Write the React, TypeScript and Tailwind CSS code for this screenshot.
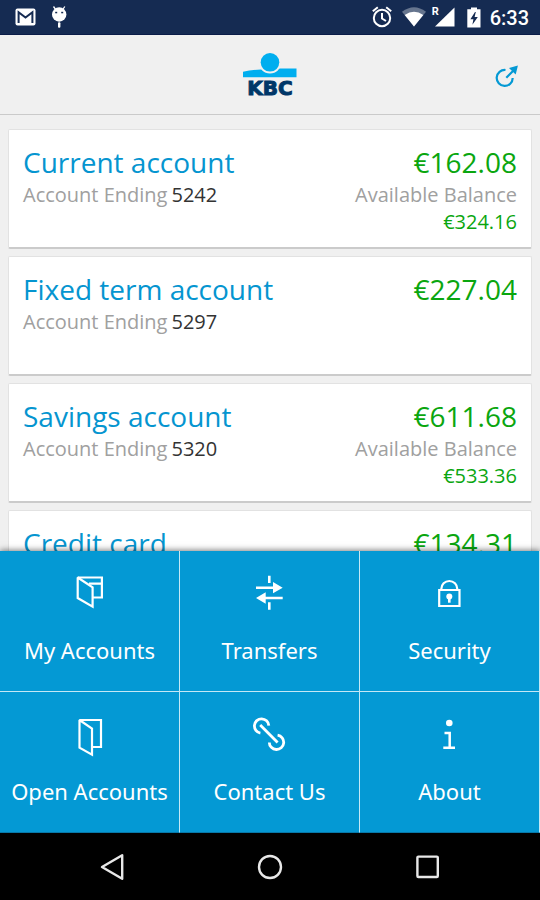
import type { ReactNode } from "react";

interface Account {
  name: string;
  ending: string;
  balance: string;
  available?: string;
}

const accounts: Account[] = [
  { name: "Current account", ending: "5242", balance: "€162.08", available: "€324.16" },
  { name: "Fixed term account", ending: "5297", balance: "€227.04" },
  { name: "Savings account", ending: "5320", balance: "€611.68", available: "€533.36" },
  { name: "Credit card", ending: "5338", balance: "€134.31" },
];

function MenuIcon({ children }: { children: ReactNode }) {
  return (
    <svg
      viewBox="0 0 49 49"
      className="h-[49px] w-[49px]"
      fill="none"
      stroke="currentColor"
      strokeWidth="2.2"
      strokeMiterlimit="2"
      aria-hidden="true"
    >
      {children}
    </svg>
  );
}

const menuItems = [
  {
    label: "My Accounts",
    icon: (
      <MenuIcon>
        <path d="M27.6 26.5H36.9V6.5H12.7M24 12.7H36.9" />
        <path d="M12.7 6.5L27.6 16.3V35.6L12.7 27Z" />
      </MenuIcon>
    ),
  },
  {
    label: "Transfers",
    icon: (
      <MenuIcon>
        <path d="M24.3 4.7V12M24.3 31.3V38.7M11 16.7H29M20 27H37.7" strokeWidth="2.6" />
        <path d="M28 11L37.7 16.7L28 22.3ZM20.7 21.3L11 27L20.7 32.7Z" fill="currentColor" stroke="none" />
      </MenuIcon>
    ),
  },
  {
    label: "Security",
    icon: (
      <MenuIcon>
        <path d="M14.2 19H34.5V35H14.2ZM16.3 19V18A8 8 0 0 1 32.3 18V19" />
        <circle cx="24.3" cy="25.5" r="3" fill="currentColor" stroke="none" />
        <path d="M24.3 26V31.7" strokeWidth="2.6" />
      </MenuIcon>
    ),
  },
  {
    label: "Open Accounts",
    icon: (
      <MenuIcon>
        <path d="M27 35H36V8H14.5" />
        <path d="M14.5 8L27 16.5V42.7L14.5 35.7Z" />
      </MenuIcon>
    ),
  },
  {
    label: "Contact Us",
    icon: (
      <MenuIcon>
        <path
          d="M15.2 13L32.6 30.6M23.8 13.6A7.2 7.2 0 1 0 15.4 21.1M24.3 30.4A7.2 7.2 0 1 0 32.6 23.2"
          strokeWidth="2.8"
        />
      </MenuIcon>
    ),
  },
  {
    label: "About",
    icon: (
      <MenuIcon>
        <circle cx="24.3" cy="11" r="3.3" fill="currentColor" stroke="none" />
        <path d="M19.5 21H24.7V35.7M18.3 35.7H30" strokeWidth="2.5" />
      </MenuIcon>
    ),
  },
];

function StatusBar() {
  return (
    <div className="flex h-[35px] shrink-0 items-center justify-between border-b border-[#0a1c48] bg-[#152b52] pl-[15px] pr-[11px] text-white">
      <div className="flex items-center gap-4">
        <svg viewBox="0 0 21 18" className="h-[18px] w-[21px]" aria-hidden="true">
          <rect x="0.5" y="0.5" width="20" height="17" rx="2" fill="currentColor" />
          <path d="M3.6 15V4.2L10.5 9.6L17.4 4.2V15" fill="none" stroke="#152b52" strokeWidth="2" />
        </svg>
        <svg viewBox="0 0 15 22" className="h-[22px] w-[15px]" fill="currentColor" aria-hidden="true">
          <circle cx="7.2" cy="8.5" r="7.2" />
          <path d="M1.5 0.5L4 4M12.8 0.5L10.4 4" stroke="currentColor" strokeWidth="1.3" />
          <rect x="6" y="16.3" width="2.4" height="5.5" rx="1" />
          <rect x="3.2" y="5.8" width="2" height="1.5" fill="#152b52" />
          <rect x="9.2" y="5.8" width="2" height="1.5" fill="#152b52" />
        </svg>
      </div>
      <div className="flex items-center">
        <svg viewBox="0 0 20 22" className="h-[22px] w-5" fill="none" stroke="currentColor" strokeWidth="2" aria-hidden="true">
          <circle cx="10" cy="12" r="8.2" />
          <path d="M10 7V12.5L14 15M0.8 5.2L5.8 1.2M19.2 5.2L14.2 1.2" />
        </svg>
        <svg viewBox="0 0 24 20" className="ml-[10px] h-5 w-6" fill="currentColor" aria-hidden="true">
          <path d="M0 4.8Q12 -4.2 24 4.8L12 19.5Z" opacity="0.35" />
          <path d="M2.7 8Q12 1.4 21.3 8L12 19.5Z" />
        </svg>
        <div className="ml-[6px] flex h-5 w-[23px]">
          <span className="h-3 w-[7px] font-['Roboto'] text-[11px] font-bold leading-[10px]">R</span>
          <svg viewBox="0 0 20 20" className="-ml-1 h-5 w-5 shrink-0" fill="currentColor" aria-hidden="true">
            <path d="M19.5 0.5V19.5H0Z" />
          </svg>
        </div>
        <svg viewBox="0 0 14 21" className="ml-3 h-[21px] w-[14px]" fill="currentColor" aria-hidden="true">
          <path d="M4 0.5H10V2.3H13.5V20.5H0.3V2.3H4Z" />
          <path d="M8 5L3.4 12.2H6.4L5.4 17.8L10.8 10H7.6L8.8 5Z" fill="#152b52" />
        </svg>
        <time className="ml-[9px] pt-[2px] font-['Roboto'] text-xl font-medium leading-6">6:33</time>
      </div>
    </div>
  );
}

function Header() {
  return (
    <header className="grid h-20 shrink-0 grid-cols-[1fr_auto_1fr] items-center border-b border-[#cacaca] bg-[#f0f0f0] px-[19px] pt-1">
      <span />
      <svg viewBox="0 0 54 48" className="h-12 w-[54px]" role="img" aria-label="KBC">
        <path d="M0 18.8Q8 17 18 16.5L36 15.5H53.5V24.3H0Z" fill="#00aeef" />
        <circle cx="27" cy="9.3" r="11.2" fill="#f0f0f0" />
        <circle cx="27" cy="9.3" r="9.3" fill="#00aeef" />
        <text
          x="27"
          y="42"
          textAnchor="middle"
          fill="#003768"
          stroke="#003768"
          strokeWidth="1"
          className="font-['DejaVu_Sans'] text-[20px] font-bold"
        >
          KBC
        </text>
      </svg>
      <button type="button" aria-label="Log out" className="justify-self-end text-[#0499d4]">
        <svg viewBox="0 0 28 28" className="h-7 w-7" fill="none" stroke="currentColor" strokeWidth="2.2" aria-hidden="true">
          <path d="M12.5 7A8 8 0 1 0 19.7 15M13.3 14.7L20 8" />
          <path d="M24.9 2.5L16 5L22.7 11.5Z" fill="currentColor" stroke="none" />
        </svg>
      </button>
    </header>
  );
}

function AccountCard({ account }: { account: Account }) {
  return (
    <li className="flex h-[120px] shrink-0 justify-between rounded-[2px] border border-b-2 border-[#e2e2e2] border-b-[#cbcbcb] bg-white px-[14px] pt-[14px] text-xl">
      <div>
        <h2 className="text-[28px] leading-[37px] text-[#0595d0]">{account.name}</h2>
        <p className="flex gap-1 leading-7 text-[#a0a0a0]">
          Account Ending <span className="text-[#333333]">{account.ending}</span>
        </p>
      </div>
      <div className="text-right text-[#0aa60f]">
        <p className="text-[28px] leading-[37px]">{account.balance}</p>
        {account.available && (
          <>
            <p className="leading-7 text-[#a0a0a0]">Available Balance</p>
            <p className="leading-[26px]">{account.available}</p>
          </>
        )}
      </div>
    </li>
  );
}

function NavBar() {
  return (
    <nav className="flex h-[67px] shrink-0 items-center justify-center bg-black text-[#e8e8e8]">
      <button type="button" aria-label="Back" className="flex w-[158px] justify-center">
        <svg viewBox="0 0 28 28" className="h-7 w-7" fill="none" stroke="currentColor" strokeWidth="2.4" strokeLinejoin="round" aria-hidden="true">
          <path d="M24.2 2.2V25.8L4 14Z" />
        </svg>
      </button>
      <button type="button" aria-label="Home" className="flex w-[158px] justify-center">
        <svg viewBox="0 0 28 28" className="h-7 w-7" fill="none" stroke="currentColor" strokeWidth="2.4" aria-hidden="true">
          <circle cx="14" cy="14" r="11" />
        </svg>
      </button>
      <button type="button" aria-label="Recent apps" className="flex w-[158px] justify-center">
        <svg viewBox="0 0 28 28" className="h-7 w-7" fill="none" stroke="currentColor" strokeWidth="2.4" aria-hidden="true">
          <rect x="3.4" y="3.6" width="20.4" height="20.4" rx="1" />
        </svg>
      </button>
    </nav>
  );
}

export default function App() {
  return (
    <div className="flex h-screen flex-col overflow-hidden bg-[#f0f0f0] font-['Open_Sans',sans-serif]">
      <StatusBar />
      <Header />
      <main className="min-h-0 flex-1 overflow-hidden px-2 pt-[14px]">
        <ul className="flex flex-col gap-[7px]">
          {accounts.map((account) => (
            <AccountCard key={account.ending} account={account} />
          ))}
        </ul>
      </main>
      <nav className="relative grid shrink-0 grid-cols-3 bg-[#0499d4] shadow-[0_-1px_6px_rgba(0,0,0,0.5)]">
        {menuItems.map((item) => (
          <button
            key={item.label}
            type="button"
            className="flex h-[141px] flex-col items-center border-b border-r border-[#c4e8f6] pt-5 text-white nth-[n+4]:border-b-[#0878a8]"
          >
            {item.icon}
            <span className="mt-[14px] whitespace-nowrap font-['Noto_Sans'] text-[22px] leading-8">{item.label}</span>
          </button>
        ))}
      </nav>
      <NavBar />
    </div>
  );
}
